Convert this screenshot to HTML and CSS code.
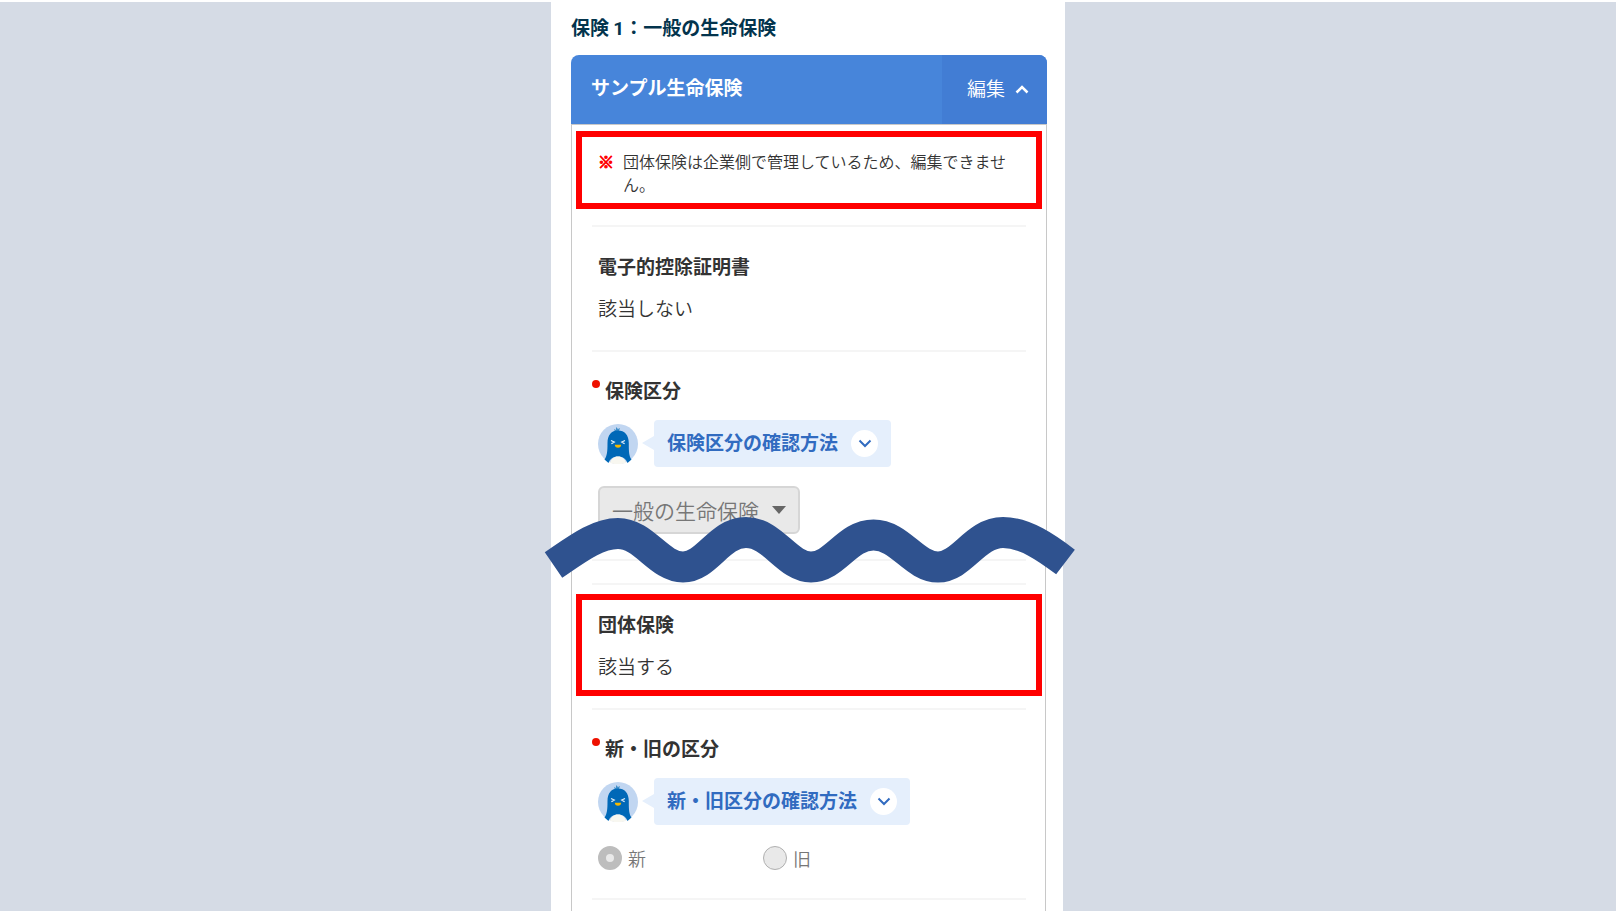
FILE: index.html
```html
<!DOCTYPE html>
<html lang="ja">
<head>
<meta charset="utf-8">
<meta name="viewport" content="width=device-width, initial-scale=1">
<title>保険 1：一般の生命保険</title>
<link rel="stylesheet" href="styles.css">
</head>
<body>
<svg class="symbols" aria-hidden="true">
  <symbol id="bird" viewBox="0 0 40 40">
    <circle cx="20" cy="20" r="20" fill="#c1d6f1"/>
    <path d="M17 8l-1-3 2 1 0-3 2 2 2-1-1 3z" fill="#3f8fca"/>
    <path d="M9.500 19C9.500 11 13.500 6.500 20 6.500S30.800 11 30.800 19C30.800 28 31 32 33.500 35.500L29.500 39C28 35 25 32.500 20 32.500S12 35 10.500 39L6.500 35.500C9 32 9.500 28 9.500 19z" fill="#0068b7"/>
    <path d="M12 39C13 35 16 32.500 20 32.500S27 35 28 39Q20 41.500 12 39z" fill="#f8f7f0"/>
    <path d="M13 16.500l3.200 1.500-2.800 1.700M27 16.500L23.800 18l2.800 1.700" fill="none" stroke="#e4f0fa" stroke-width="1.300"/>
    <path d="M16.800 20.800h6.400q-.2 3-3.200 3t-3.200-3z" fill="#f5b800"/>
  </symbol>
  <symbol id="down" viewBox="0 0 14 9">
    <path d="M1.500 1.500L7 7l5.500-5.500" fill="none" stroke="currentColor" stroke-width="2"/>
  </symbol>
</svg>

<main class="sheet">
  <section class="piece piece-upper">
    <h1 class="page-title">保険 <span class="number">1</span>：一般の生命保険</h1>
    <header class="card-head">
      <h2 class="card-title">サンプル生命保険</h2>
      <button class="edit" type="button">編集
        <svg class="edit-icon" viewBox="0 0 14 9"><path d="M1.500 7.500L7 2l5.500 5.500" fill="none" stroke="currentColor" stroke-width="2.500"/></svg>
      </button>
    </header>
    <div class="card-body">
      <div class="row row-note">
        <p class="frame note"><span class="note-mark">※</span><span>団体保険は企業側で管理しているため、編集できません。</span></p>
      </div>
      <div class="row row-plain">
        <h3 class="label">電子的控除証明書</h3>
        <p class="value">該当しない</p>
      </div>
      <div class="row row-select">
        <h3 class="label required"><label for="kind">保険区分</label></h3>
        <div class="help">
          <svg class="avatar"><use href="#bird"/></svg>
          <button class="bubble" type="button"><span class="bubble-text">保険区分の確認方法</span><span class="bubble-icon"><svg class="chevron"><use href="#down"/></svg></span></button>
        </div>
        <div class="select-box">
          <select class="select" id="kind" disabled><option>一般の生命保険</option></select>
          <svg class="caret" viewBox="0 0 14 8"><path d="M0 0h14L7 8z" fill="currentColor"/></svg>
        </div>
      </div>
    </div>
    <svg class="wave" viewBox="0 0 532 72" aria-hidden="true">
      <path d="M10.500 53C34 37 54 21.500 75 21.500C101 21.500 116 55 140 55C164 55 176 20.500 203 20.500C230 20.500 244 55 268 55C292 55 304 23 330.500 23C357 23 371 55 395 55C419 55 432 20.500 460 20.500C482 20.500 504 36 522.500 50" fill="none" stroke="#2f528f" stroke-width="31"/>
    </svg>
  </section>

  <section class="piece piece-lower">
    <div class="card-body">
      <div class="row row-gap"></div>
      <div class="row row-group">
        <div class="frame group">
          <h3 class="label">団体保険</h3>
          <p class="value">該当する</p>
        </div>
      </div>
      <div class="row row-radio">
        <h3 class="label required" id="age-label">新・旧の区分</h3>
        <div class="help">
          <svg class="avatar"><use href="#bird"/></svg>
          <button class="bubble" type="button"><span class="bubble-text">新・旧区分の確認方法</span><span class="bubble-icon"><svg class="chevron"><use href="#down"/></svg></span></button>
        </div>
        <div class="radios" role="radiogroup" aria-labelledby="age-label">
          <label class="choice"><input class="radio" type="radio" name="age" checked disabled>新</label>
          <label class="choice"><input class="radio" type="radio" name="age" disabled>旧</label>
        </div>
      </div>
    </div>
  </section>
</main>
</body>
</html>
```
FILE: styles.css
```css
* {
  box-sizing: border-box;
}

body {
  margin: 0;
  min-height: 100vh;
  display: flex;
  justify-content: center;
  border-top: 2px solid #fff;
  background: #d5dbe5;
  color: #333;
  font-family: "Noto Sans CJK JP", sans-serif;
  font-size: 19px;
  font-weight: 350;
  line-height: 28px;
}

h1, h2, h3, p {
  margin: 0;
  font-size: inherit;
}

button, select {
  font: inherit;
}

.symbols {
  position: absolute;
  width: 0;
  height: 0;
}

.sheet {
  width: 100%;
  max-width: 514px;
  display: flex;
  flex-direction: column;
}

.piece {
  position: relative;
  padding: 0 18px 0 20px;
  background: #fff;
}

.piece-lower {
  flex: 1;
  display: flex;
  flex-direction: column;
  margin-right: 2px;
  padding-right: 17px;
}

.page-title {
  padding: 11px 0 14px;
  color: #03344d;
  font-weight: 700;
}

.number {
  font-family: Roboto, sans-serif;
  line-height: 1;
}

.card-head {
  display: flex;
  height: 69px;
  overflow: hidden;
  border-radius: 8px 8px 0 0;
  background: #4785da;
  color: #fff;
}

.card-title {
  flex: 1;
  padding: 18px 20px;
  font-weight: 700;
}

.edit {
  display: flex;
  align-items: center;
  gap: 10px;
  padding: 0 18px 4px 25px;
  border: 0;
  background: #427dd4;
  color: #fff;
}

.edit-icon {
  width: 14px;
  height: 9px;
  margin-top: 4px;
}

.card-body {
  flex: 1;
  padding: 0 19px 0 20px;
  border: 1px solid #c8c8c8;
  border-width: 0 1px;
}

.piece-upper .card-body {
  padding-right: 20px;
  border-top-width: 1px;
}

.row {
  padding: 24px 6px 28px;
  border-bottom: 2px solid #f5f5f5;
}

.frame {
  margin: 0 -16px;
  border: 6px solid #f00;
}

.row-note {
  padding: 6px 0 16px;
}

.row-plain {
  padding-top: 25px;
}

.note {
  display: flex;
  gap: 9px;
  padding: 13px 16px 7px;
  font-size: 16px;
  line-height: 23px;
}

.note-mark {
  color: #f00;
  font-weight: 900;
  -webkit-text-stroke: 1px #f00;
}

.label {
  font-weight: 700;
}

.value {
  margin-top: 14px;
}

.required {
  position: relative;
  padding-left: 7px;
}

.required::before {
  content: "";
  position: absolute;
  top: 4px;
  left: -6px;
  width: 8px;
  height: 8px;
  border-radius: 50%;
  background: #e10;
}

.help {
  display: flex;
  align-items: center;
  gap: 16px;
  margin-top: 16px;
}

.avatar {
  width: 40px;
  height: 40px;
}

.bubble {
  position: relative;
  display: flex;
  align-items: center;
  gap: 13px;
  height: 47px;
  padding: 0 13px;
  border: 0;
  border-radius: 4px;
  background: #e5effc;
  color: #316bc0;
  font-weight: 700;
}

.bubble-text {
  padding-bottom: 4px;
}

.bubble::before {
  content: "";
  position: absolute;
  top: 16px;
  left: -12px;
  border: 7px solid transparent;
  border-right: 12px solid #e5effc;
  border-left: 0;
}

.bubble-icon {
  display: flex;
  align-items: center;
  justify-content: center;
  width: 27px;
  height: 27px;
  border-radius: 50%;
  background: #fff;
}

.chevron {
  width: 14px;
  height: 9px;
}

.row-select {
  padding-bottom: 25px;
}

.select-box {
  position: relative;
  width: 202px;
  margin-top: 19px;
}

.select {
  appearance: none;
  display: block;
  width: 100%;
  height: 48px;
  padding: 0 12px;
  border: 2px solid #d6d6d6;
  border-radius: 6px;
  background: #e9e9e9;
  color: #777;
  font-size: 21px;
  opacity: 1;
}

.caret {
  position: absolute;
  top: 20px;
  right: 14px;
  width: 14px;
  height: 8px;
  color: #666;
}

.wave {
  position: absolute;
  z-index: 1;
  left: -8px;
  right: -10px;
  bottom: -23px;
}

.row-gap {
  padding: 22px 0 0;
}

.row-group {
  padding: 9px 0 12px;
}

.group {
  padding: 10px 16px;
}

.row-radio {
  padding-bottom: 26px;
}

.radios {
  display: grid;
  grid-template-columns: 165px 1fr;
  margin-top: 19px;
}

.choice {
  display: flex;
  align-items: center;
  gap: 6px;
  color: #777;
  font-size: 18px;
}

.radio {
  appearance: none;
  width: 24px;
  height: 24px;
  margin: 0;
  border: 1px solid #b0b0b0;
  border-radius: 50%;
  background: #e9e9e9;
}

.radio:checked {
  border: 8px solid #bdbdbd;
}
```
